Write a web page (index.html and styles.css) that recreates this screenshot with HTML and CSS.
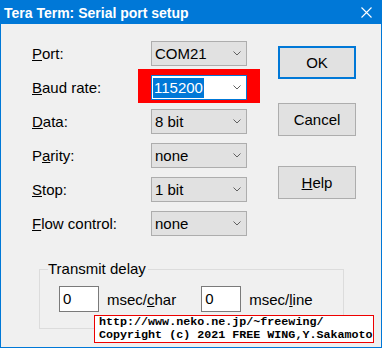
FILE: index.html
```html
<!DOCTYPE html>
<html lang="en">
<head>
    <meta charset="UTF-8">
    <meta name="viewport" content="width=device-width, initial-scale=1.0">
    <title>Serial port setup</title>
    <link rel="stylesheet" href="styles.css">
</head>
<body>

<div class="window">
    <div class="titlebar">
        <span class="title">Tera Term: Serial port setup</span>
        <svg class="close" width="11" height="11" viewBox="0 0 11 11">
            <path d="M0.5 0.5 L10.5 10.5 M10.5 0.5 L0.5 10.5" stroke="#fff" stroke-width="1.1" fill="none"/>
        </svg>
    </div>

    <div class="client">
        <div class="top">
            <div class="fields">
                <label><u>P</u>ort:</label>
                <div class="combo"><span>COM21</span><svg class="arrow" width="8" height="5" viewBox="0 0 8 5"><path d="M0.5 0.5 L4 4 L7.5 0.5" stroke="#606060" fill="none"/></svg></div>

                <label><u>B</u>aud rate:</label>
                <div class="combo active"><span class="sel">115200</span><svg class="arrow" width="8" height="5" viewBox="0 0 8 5"><path d="M0.5 0.5 L4 4 L7.5 0.5" stroke="#606060" fill="none"/></svg></div>

                <label><u>D</u>ata:</label>
                <div class="combo"><span>8 bit</span><svg class="arrow" width="8" height="5" viewBox="0 0 8 5"><path d="M0.5 0.5 L4 4 L7.5 0.5" stroke="#606060" fill="none"/></svg></div>

                <label>P<u>a</u>rity:</label>
                <div class="combo"><span>none</span><svg class="arrow" width="8" height="5" viewBox="0 0 8 5"><path d="M0.5 0.5 L4 4 L7.5 0.5" stroke="#606060" fill="none"/></svg></div>

                <label><u>S</u>top:</label>
                <div class="combo"><span>1 bit</span><svg class="arrow" width="8" height="5" viewBox="0 0 8 5"><path d="M0.5 0.5 L4 4 L7.5 0.5" stroke="#606060" fill="none"/></svg></div>

                <label><u>F</u>low control:</label>
                <div class="combo"><span>none</span><svg class="arrow" width="8" height="5" viewBox="0 0 8 5"><path d="M0.5 0.5 L4 4 L7.5 0.5" stroke="#606060" fill="none"/></svg></div>
            </div>

            <div class="buttons">
                <button class="btn default">OK</button>
                <button class="btn cancel">Cancel</button>
                <button class="btn help"><u>H</u>elp</button>
            </div>
        </div>

        <fieldset class="delay">
            <legend>Transmit delay</legend>
            <div class="delay-row">
                <div class="edit">0</div>
                <span class="unit">msec/<u>c</u>har</span>
                <div class="edit second">0</div>
                <span class="unit">msec/<u>l</u>ine</span>
            </div>
        </fieldset>

        <div class="credit">http://www.neko.ne.jp/~freewing/<br>Copyright (c) 2021 FREE WING,Y.Sakamoto</div>
    </div>
</div>

</body>
</html>
```

FILE: styles.css
```css
        html, body {
            margin: 0;
            padding: 0;
        }
        body {
            font-family: "Liberation Sans", Arial, sans-serif;
            font-size: 15px;
            color: #000;
        }
        .window {
            width: 382px;
            height: 348px;
            box-sizing: border-box;
            border: 1px solid #0078d7;
            border-top: none;
            background-color: #f0f0f0;
            display: flex;
            flex-direction: column;
        }
        .titlebar {
            height: 24px;
            margin: 0 -1px;
            background-color: #0078d7;
            color: #fff;
            display: flex;
            align-items: center;
            justify-content: space-between;
            padding: 0 10px 0 4px;
        }
        .title {
            font-weight: bold;
            font-size: 14px;
            line-height: 16px;
            margin-top: 2px;
        }
        .close {
            display: block;
            margin-top: 1px;
        }
        .client {
            position: relative;
            flex: 1;
        }
        .top {
            display: flex;
        }
        .fields {
            display: grid;
            grid-template-columns: 119px 96px;
            grid-auto-rows: 25px;
            row-gap: 9px;
            padding: 17px 0 0 31px;
        }
        .fields label {
            display: flex;
            align-items: center;
            line-height: 17px;
        }
        .combo {
            position: relative;
            box-sizing: border-box;
            border: 1px solid #adadad;
            background-color: #e1e1e1;
            display: flex;
            align-items: center;
            justify-content: space-between;
            padding: 0 5px 0 3px;
        }
        .combo.active {
            background-color: #fff;
            border-color: #0078d7;
            padding-left: 1px;
        }
        .combo.active::after {
            content: "";
            position: absolute;
            left: -14px;
            right: -14px;
            top: -7px;
            bottom: -4px;
            border-style: solid;
            border-color: #f00;
            border-width: 6px 13px 3px 13px;
        }
        .sel {
            background-color: #0078d7;
            color: #fff;
            padding: 1px 1px 2px 1px;
        }
        .arrow {
            display: block;
        }
        .buttons {
            display: flex;
            flex-direction: column;
            padding: 22px 0 0 31px;
        }
        .btn {
            width: 78px;
            height: 33px;
            box-sizing: border-box;
            background-color: #e1e1e1;
            border: 1px solid #adadad;
            border-radius: 0;
            font-family: "Liberation Sans", Arial, sans-serif;
            font-size: 15px;
            color: #000;
            padding: 0;
        }
        .btn.default {
            border: 2px solid #0078d7;
        }
        .btn.cancel {
            margin-top: 24px;
        }
        .btn.help {
            margin-top: 30px;
        }
        .delay {
            margin: 25px 0 0 38px;
            width: 305px;
            box-sizing: border-box;
            border: 1px solid #dcdcdc;
            padding: 0 0 16px 8px;
        }
        .delay legend {
            padding: 0 2px 0 0;
            line-height: 16px;
        }
        .delay-row {
            display: flex;
            align-items: center;
            margin: 9px 0 0 11px;
        }
        .edit {
            width: 40px;
            height: 26px;
            box-sizing: border-box;
            border: 1px solid #7a7a7a;
            background-color: #fff;
            padding: 3px 0 0 3px;
            line-height: 18px;
        }
        .unit {
            margin-left: 8px;
        }
        .edit.second {
            margin-left: 25px;
        }
        .credit {
            position: absolute;
            left: 93px;
            top: 291px;
            width: 280px;
            height: 28px;
            box-sizing: border-box;
            border: 1px solid #e00;
            background-color: #fff;
            font-family: "Liberation Mono", "Courier New", monospace;
            font-weight: bold;
            font-size: 11.7px;
            line-height: 13px;
            padding: 0 0 0 4px;
            white-space: nowrap;
        }
```
